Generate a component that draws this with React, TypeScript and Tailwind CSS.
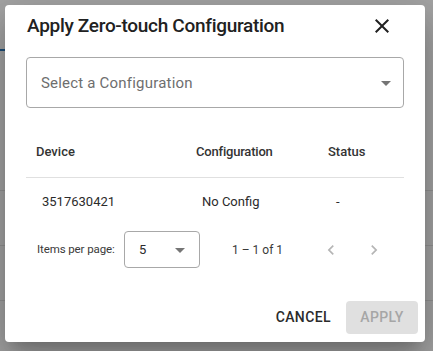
import React from 'react';

const ArrowDrop = ({ size = 24 }: { size?: number }) => (
  <svg width={size} height={size} viewBox="0 0 24 24" fill="#757575">
    <path d="M7 10l5 5 5-5z" />
  </svg>
);

const Chevron = ({ dir }: { dir: 'left' | 'right' }) => (
  <svg width={20} height={20} viewBox="0 0 24 24" fill="#b5b5b5">
    {dir === 'left' ? (
      <path d="M15.41 7.41L14 6l-6 6 6 6 1.41-1.41L10.83 12z" />
    ) : (
      <path d="M10 6L8.59 7.41 13.17 12l-4.58 4.59L10 18l6-6z" />
    )}
  </svg>
);

export default function App() {
  return (
    <div className="relative w-[433px] h-[351px] overflow-hidden bg-[#a4a4a4] font-['Roboto','Liberation_Sans',sans-serif]">
      {/* page behind the backdrop */}
      <div className="flex flex-col">
        <div className="h-[51px] w-[120px] border-b-2 border-[#1d4f7a]" />
        <div className="h-[140px] border-b border-[#939393]" />
        <div className="h-[55px] border-b border-[#939393]" />
        <div className="h-[55px] border-b border-[#939393]" />
      </div>

      {/* dialog */}
      <div className="absolute left-[5px] top-[5px] w-[420px] h-[337px] bg-white rounded-[4px] shadow-[0_11px_15px_-7px_rgba(0,0,0,0.2),0_24px_38px_3px_rgba(0,0,0,0.14),0_9px_46px_8px_rgba(0,0,0,0.12)] flex flex-col">
        {/* title */}
        <div className="mt-[5px] h-[32px] flex items-center pl-[22px] pr-[31px]">
          <h2 className="flex-1 text-[19px] leading-[32px] font-medium text-[#212121] tracking-[-0.3px]">
            Apply Zero-touch Configuration
          </h2>
          <svg width={24} height={24} viewBox="0 0 24 24" fill="#212121">
            <path d="M19 6.41L17.59 5 12 10.59 6.41 5 5 6.41 10.59 12 5 17.59 6.41 19 12 13.41 17.59 19 19 17.59 13.41 12z" />
          </svg>
        </div>

        <div className="px-[21px] flex flex-col">
          {/* select */}
          <div className="mt-[15px] h-[51px] border border-[#a8a8a8] rounded-[4px] flex items-center pl-[14px] pr-[5px]">
            <span className="flex-1 text-[15px] text-[#6e6e6e] tracking-[0.2px] pt-[1px]">Select a Configuration</span>
            <ArrowDrop />
          </div>

          {/* table */}
          <div className="mt-[18px] h-[52px] grid grid-cols-[170px_132px_1fr] items-center border-b border-[#e0e0e0] text-[13px] font-medium text-[#333333]">
            <span className="pl-[10px]">Device</span>
            <span className="tracking-[-0.2px]">Configuration</span>
            <span>Status</span>
          </div>
          <div className="h-[46px] grid grid-cols-[170px_132px_1fr] items-center text-[13px] text-[#2b2b2b] pt-[1px]">
            <span className="pl-[16px]">3517630421</span>
            <span className="pl-[6px]">No Config</span>
            <span className="pl-[8px]">-</span>
          </div>

          {/* paginator */}
          <div className="h-[51px] flex items-center text-[12px] text-[#3a3a3a]">
            <span className="ml-[11px] w-[79px] shrink-0 whitespace-nowrap text-[11.5px] tracking-[-0.1px]">Items per page:</span>
            <div className="ml-[8px] w-[76px] h-[37px] shrink-0 border border-[#a8a8a8] rounded-[4px] flex items-center pl-[14px] pr-[7px]">
              <span className="flex-1 text-[13px] text-[#2b2b2b]">5</span>
              <ArrowDrop />
            </div>
            <span className="ml-[32px] w-[89px] shrink-0 whitespace-nowrap">1 – 1 of 1</span>
            <div className="flex items-center gap-[23px]">
              <Chevron dir="left" />
              <Chevron dir="right" />
            </div>
          </div>
        </div>

        {/* actions */}
        <div className="mt-[26px] flex justify-end items-center pr-[7px]">
          <button className="h-[33px] px-[15px] text-[14px] font-medium tracking-[0.4px] text-[#2b2b2b]">
            CANCEL
          </button>
          <button className="h-[33px] w-[72px] rounded-[4px] bg-[#e0e0e0] text-[14px] font-medium tracking-[0.4px] text-[#a6a6a6]">
            APPLY
          </button>
        </div>
      </div>
    </div>
  );
}
